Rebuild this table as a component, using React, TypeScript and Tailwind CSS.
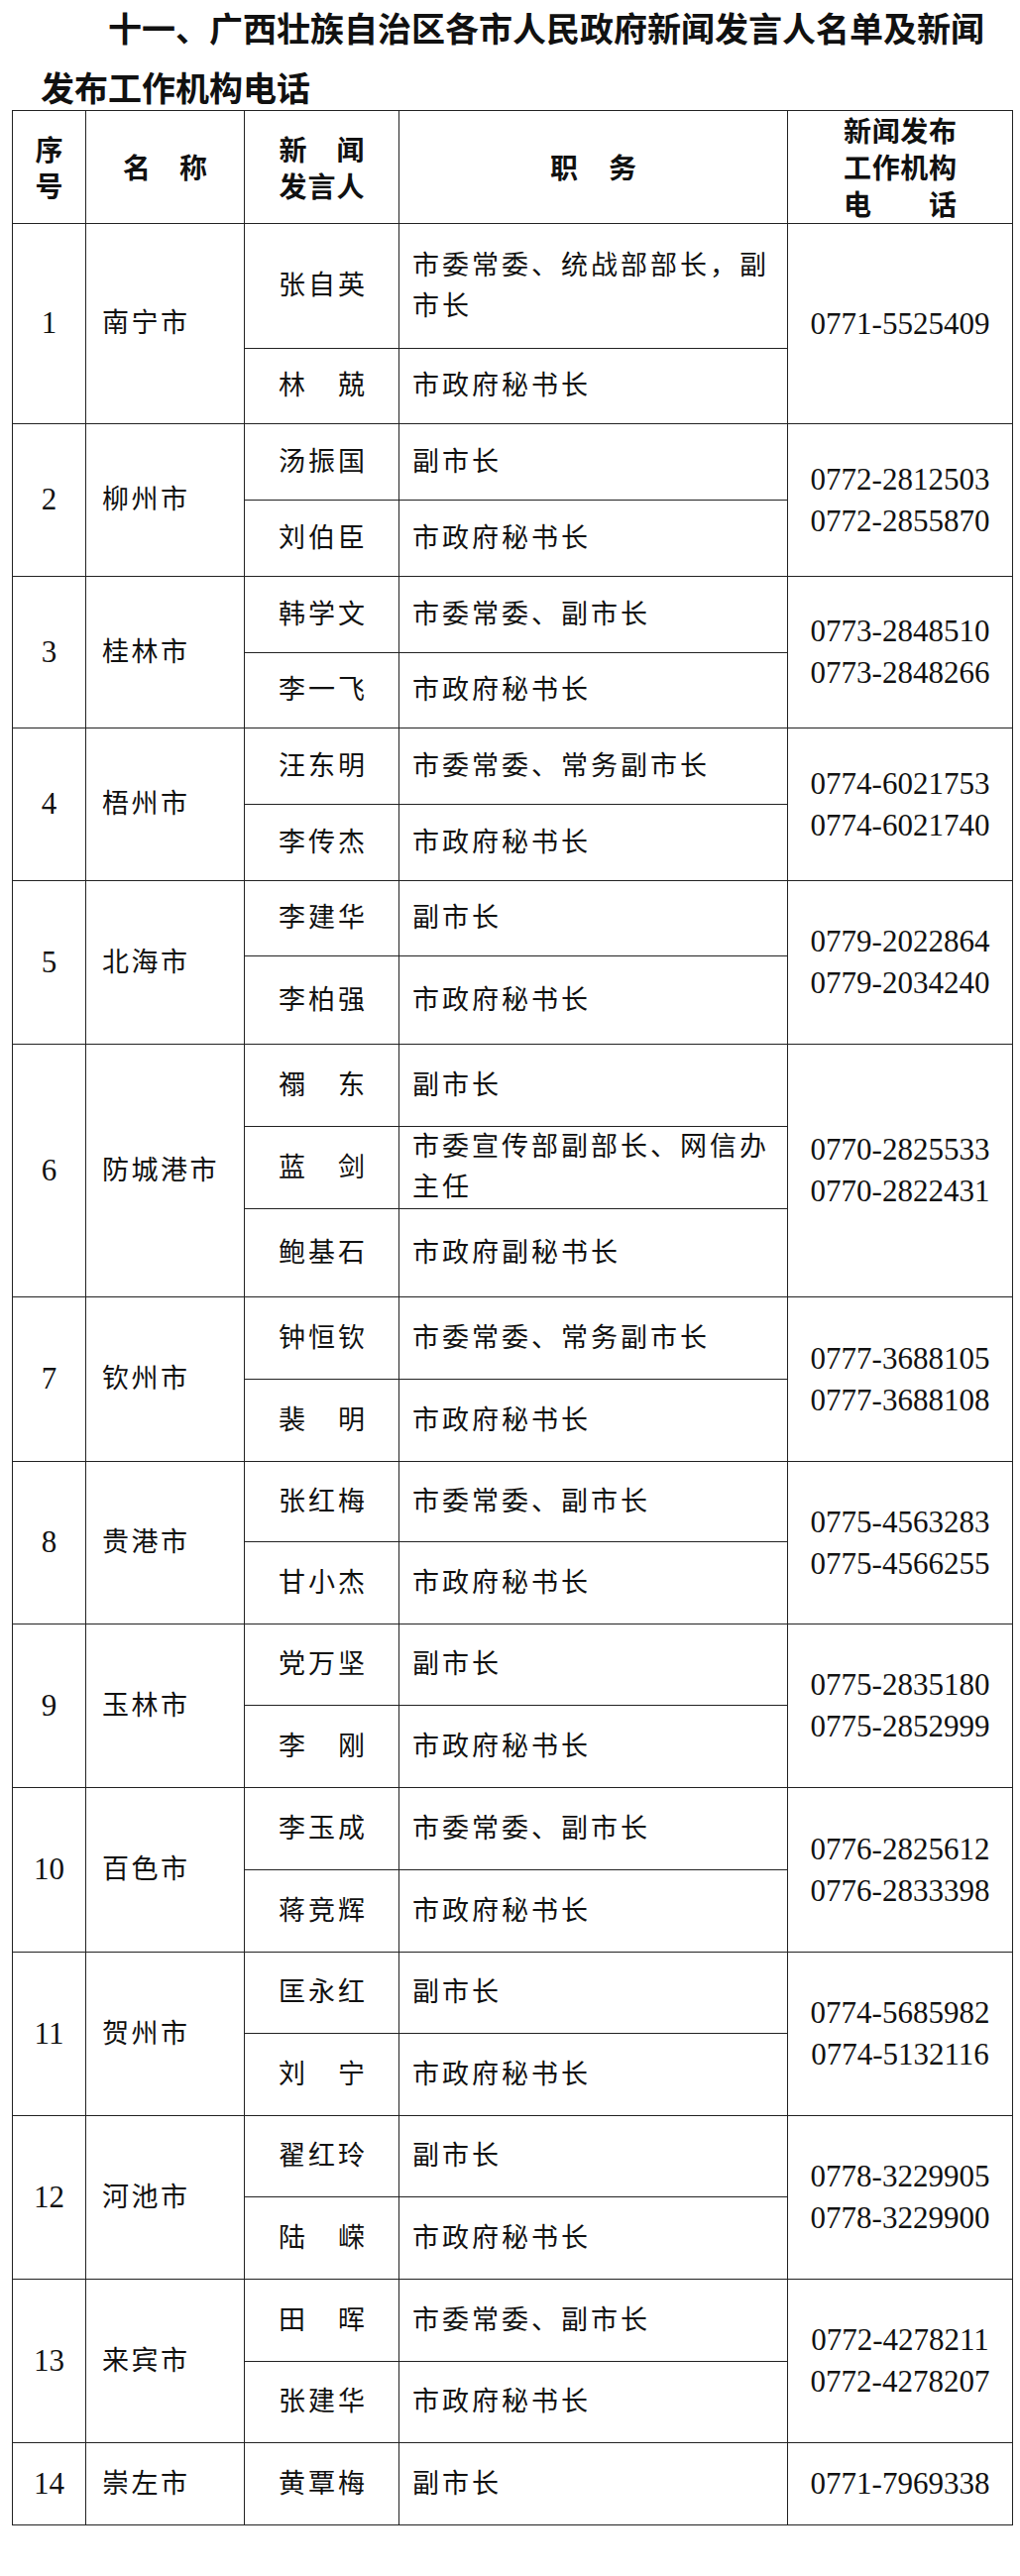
import React from 'react';

interface Person {
  name: string;
  title: string;
  h: string;
}

interface City {
  no: number;
  city: string;
  phones: string[];
  people: Person[];
}

const cities: City[] = [
  {
    no: 1,
    city: '南宁市',
    phones: ['0771-5525409'],
    people: [
      { name: '张自英', title: '市委常委、统战部部长，副市长', h: 'h-[126px]' },
      { name: '林兢', title: '市政府秘书长', h: 'h-[76px]' },
    ],
  },
  {
    no: 2,
    city: '柳州市',
    phones: ['0772-2812503', '0772-2855870'],
    people: [
      { name: '汤振国', title: '副市长', h: 'h-[77px]' },
      { name: '刘伯臣', title: '市政府秘书长', h: 'h-[77px]' },
    ],
  },
  {
    no: 3,
    city: '桂林市',
    phones: ['0773-2848510', '0773-2848266'],
    people: [
      { name: '韩学文', title: '市委常委、副市长', h: 'h-[77px]' },
      { name: '李一飞', title: '市政府秘书长', h: 'h-[76px]' },
    ],
  },
  {
    no: 4,
    city: '梧州市',
    phones: ['0774-6021753', '0774-6021740'],
    people: [
      { name: '汪东明', title: '市委常委、常务副市长', h: 'h-[77px]' },
      { name: '李传杰', title: '市政府秘书长', h: 'h-[77px]' },
    ],
  },
  {
    no: 5,
    city: '北海市',
    phones: ['0779-2022864', '0779-2034240'],
    people: [
      { name: '李建华', title: '副市长', h: 'h-[76px]' },
      { name: '李柏强', title: '市政府秘书长', h: 'h-[89px]' },
    ],
  },
  {
    no: 6,
    city: '防城港市',
    phones: ['0770-2825533', '0770-2822431'],
    people: [
      { name: '禤东', title: '副市长', h: 'h-[83px]' },
      { name: '蓝剑', title: '市委宣传部副部长、网信办主任', h: 'h-[82px]' },
      { name: '鲍基石', title: '市政府副秘书长', h: 'h-[89px]' },
    ],
  },
  {
    no: 7,
    city: '钦州市',
    phones: ['0777-3688105', '0777-3688108'],
    people: [
      { name: '钟恒钦', title: '市委常委、常务副市长', h: 'h-[83px]' },
      { name: '裴明', title: '市政府秘书长', h: 'h-[83px]' },
    ],
  },
  {
    no: 8,
    city: '贵港市',
    phones: ['0775-4563283', '0775-4566255'],
    people: [
      { name: '张红梅', title: '市委常委、副市长', h: 'h-[81px]' },
      { name: '甘小杰', title: '市政府秘书长', h: 'h-[83px]' },
    ],
  },
  {
    no: 9,
    city: '玉林市',
    phones: ['0775-2835180', '0775-2852999'],
    people: [
      { name: '党万坚', title: '副市长', h: 'h-[82px]' },
      { name: '李刚', title: '市政府秘书长', h: 'h-[83px]' },
    ],
  },
  {
    no: 10,
    city: '百色市',
    phones: ['0776-2825612', '0776-2833398'],
    people: [
      { name: '李玉成', title: '市委常委、副市长', h: 'h-[83px]' },
      { name: '蒋竞辉', title: '市政府秘书长', h: 'h-[83px]' },
    ],
  },
  {
    no: 11,
    city: '贺州市',
    phones: ['0774-5685982', '0774-5132116'],
    people: [
      { name: '匡永红', title: '副市长', h: 'h-[82px]' },
      { name: '刘宁', title: '市政府秘书长', h: 'h-[83px]' },
    ],
  },
  {
    no: 12,
    city: '河池市',
    phones: ['0778-3229905', '0778-3229900'],
    people: [
      { name: '翟红玲', title: '副市长', h: 'h-[82px]' },
      { name: '陆嵘', title: '市政府秘书长', h: 'h-[83px]' },
    ],
  },
  {
    no: 13,
    city: '来宾市',
    phones: ['0772-4278211', '0772-4278207'],
    people: [
      { name: '田晖', title: '市委常委、副市长', h: 'h-[83px]' },
      { name: '张建华', title: '市政府秘书长', h: 'h-[82px]' },
    ],
  },
  {
    no: 14,
    city: '崇左市',
    phones: ['0771-7969338'],
    people: [{ name: '黄覃梅', title: '副市长', h: 'h-[83px]' }],
  },
];

// spreads characters across a fixed width, like justified table text in the print original
function Spread({ text, w }: { text: string; w: string }) {
  return (
    <span className={`flex justify-between mx-auto ${w}`}>
      {text.split('').map((c, i) => (
        <span key={i}>{c}</span>
      ))}
    </span>
  );
}

const cell = 'border border-[#222] align-middle p-0';

export default function App() {
  return (
    <div className="min-h-[2599px] bg-white text-[#111]">
      <p className="-mt-[2px] h-[113px] pl-[41px] pr-[28px] indent-[68px] text-[34px] font-bold leading-[60px] font-['Noto_Sans_CJK_SC',sans-serif]">
        十一、广西壮族自治区各市人民政府新闻发言人名单及新闻发布工作机构电话
      </p>

      <table className="ml-[12px] w-[1009px] table-fixed border-collapse font-['Liberation_Serif','Noto_Sans_CJK_SC',serif]">
        <colgroup>
          <col className="w-[74px]" />
          <col className="w-[160px]" />
          <col className="w-[156px]" />
          <col className="w-[392px]" />
          <col className="w-[227px]" />
        </colgroup>
        <thead>
          <tr className="h-[114px] text-[28px] font-bold leading-[37px] font-['Noto_Sans_CJK_SC',sans-serif]">
            <th className={cell}>
              <div>序</div>
              <div>号</div>
            </th>
            <th className={cell}>
              <Spread text="名称" w="w-[85px]" />
            </th>
            <th className={cell}>
              <Spread text="新闻" w="w-[86px]" />
              <Spread text="发言人" w="w-[86px]" />
            </th>
            <th className={cell}>
              <Spread text="职务" w="w-[87px]" />
            </th>
            <th className={cell}>
              <Spread text="新闻发布" w="w-[114px]" />
              <Spread text="工作机构" w="w-[114px]" />
              <Spread text="电话" w="w-[114px]" />
            </th>
          </tr>
        </thead>
        {cities.map((c) => (
          <tbody key={c.no}>
            {c.people.map((p, i) => (
              <tr key={p.name} className={p.h}>
                {i === 0 && (
                  <>
                    <td rowSpan={c.people.length} className={`${cell} text-center text-[31px]`}>
                      {c.no}
                    </td>
                    <td rowSpan={c.people.length} className={`${cell} pl-[16px] text-left text-[27px] tracking-[2.5px]`}>
                      {c.city}
                    </td>
                  </>
                )}
                <td className={`${cell} text-[27px]`}>
                  <Spread text={p.name} w="w-[87px]" />
                </td>
                <td className={`${cell} pl-[13px] pr-[4px] text-left text-[27px] leading-[41px] tracking-[3px]`}>
                  {p.title}
                </td>
                {i === 0 && (
                  <td rowSpan={c.people.length} className={`${cell} text-center text-[31px] leading-[42px]`}>
                    {c.phones.map((ph) => (
                      <div key={ph}>{ph}</div>
                    ))}
                  </td>
                )}
              </tr>
            ))}
          </tbody>
        ))}
      </table>
    </div>
  );
}
